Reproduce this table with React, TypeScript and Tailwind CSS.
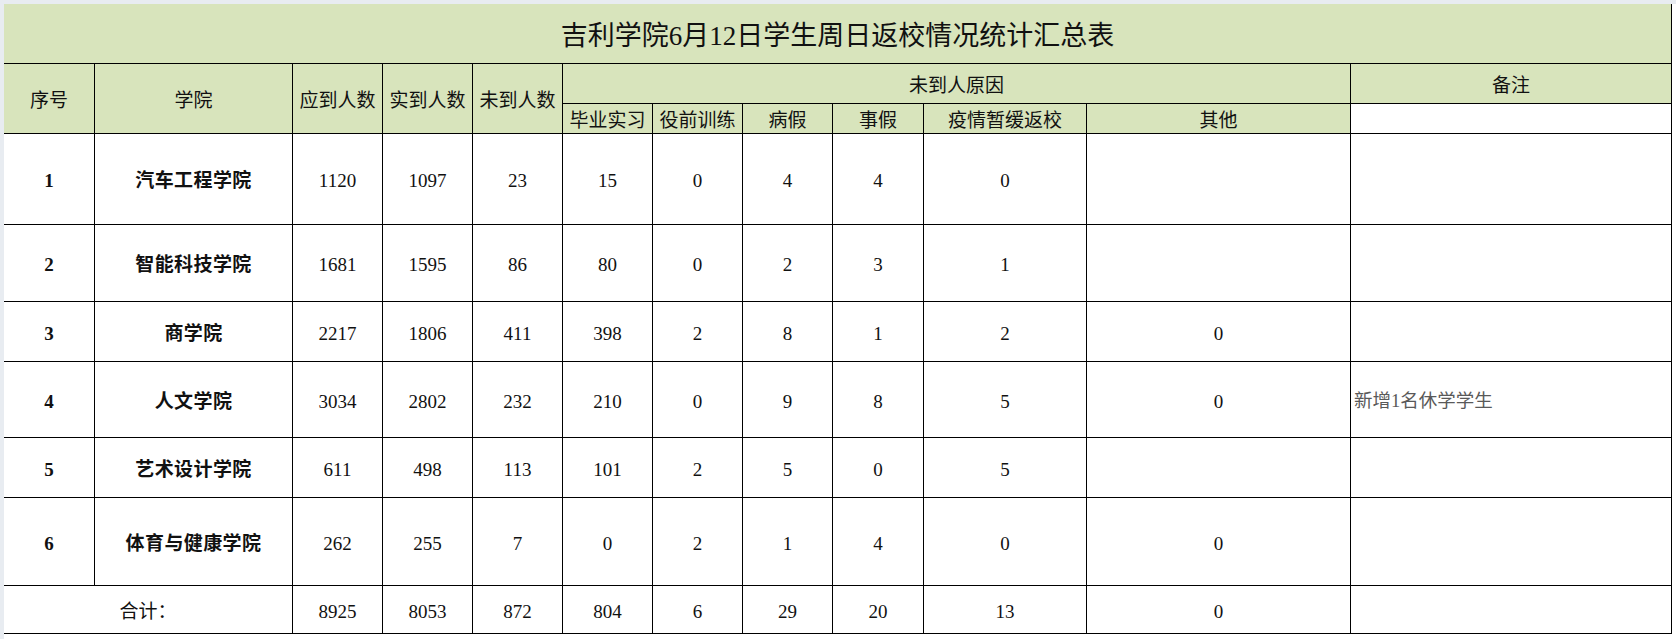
import React from "react";

const FONT = '"Liberation Serif", "Noto Sans CJK SC", serif';

type Row = {
  no: string;
  name: string;
  vals: string[];
  other: string;
  note: string;
};

const rows: Row[] = [
  { no: "1", name: "汽车工程学院", vals: ["1120", "1097", "23", "15", "0", "4", "4", "0"], other: "", note: "" },
  { no: "2", name: "智能科技学院", vals: ["1681", "1595", "86", "80", "0", "2", "3", "1"], other: "", note: "" },
  { no: "3", name: "商学院", vals: ["2217", "1806", "411", "398", "2", "8", "1", "2"], other: "0", note: "" },
  { no: "4", name: "人文学院", vals: ["3034", "2802", "232", "210", "0", "9", "8", "5"], other: "0", note: "新增1名休学学生" },
  { no: "5", name: "艺术设计学院", vals: ["611", "498", "113", "101", "2", "5", "0", "5"], other: "", note: "" },
  { no: "6", name: "体育与健康学院", vals: ["262", "255", "7", "0", "2", "1", "4", "0"], other: "0", note: "" },
];

const totals = ["8925", "8053", "872", "804", "6", "29", "20", "13"];

const cell = "border-r border-b border-black flex items-center justify-center pt-[5px]";
const green = "bg-[#d8e4bc]";

export default function App() {
  return (
    <div
      className="w-[1676px] h-[639px] bg-white border-l-[4px] border-t-[4px] border-[#e8ecf1] overflow-hidden"
      style={{ fontFamily: FONT }}
    >
      <div className="grid w-[1668px] grid-cols-[91px_198px_90px_90px_90px_90px_90px_90px_91px_163px_264px_321px] grid-rows-[60px_40px_30px_91px_77px_60px_76px_60px_88px_48px] text-[19px] text-[#111]">
        {/* title */}
        <div className={`${cell} ${green} col-span-12 text-[27px]`}>
          吉利学院6月12日学生周日返校情况统计汇总表
        </div>

        {/* header row 1 */}
        <div className={`${cell} ${green} row-span-2`}>序号</div>
        <div className={`${cell} ${green} row-span-2`}>学院</div>
        <div className={`${cell} ${green} row-span-2`}>应到人数</div>
        <div className={`${cell} ${green} row-span-2`}>实到人数</div>
        <div className={`${cell} ${green} row-span-2`}>未到人数</div>
        <div className={`${cell} ${green} col-span-6`}>未到人原因</div>
        <div className={`${cell} ${green}`}>备注</div>

        {/* header row 2 */}
        <div className={`${cell} ${green}`}>毕业实习</div>
        <div className={`${cell} ${green}`}>役前训练</div>
        <div className={`${cell} ${green}`}>病假</div>
        <div className={`${cell} ${green}`}>事假</div>
        <div className={`${cell} ${green}`}>疫情暂缓返校</div>
        <div className={`${cell} ${green}`}>其他</div>
        <div className={`${cell} bg-white`}></div>

        {rows.map((r) => (
          <React.Fragment key={r.no}>
            <div className={`${cell} font-bold`}>{r.no}</div>
            <div className={`${cell} font-bold tracking-[0.4px]`}>{r.name}</div>
            {r.vals.map((v, i) => (
              <div key={i} className={cell}>
                {v}
              </div>
            ))}
            <div className={cell}>{r.other}</div>
            <div className="border-r border-b border-black flex items-center justify-start pl-[3px] pt-[5px] text-[18.5px] text-[#595959]">
              {r.note}
            </div>
          </React.Fragment>
        ))}

        {/* totals */}
        <div className={`${cell} col-span-2`}>合计：</div>
        {totals.map((v, i) => (
          <div key={i} className={cell}>
            {v}
          </div>
        ))}
        <div className={cell}>0</div>
        <div className={cell}></div>
      </div>
    </div>
  );
}
